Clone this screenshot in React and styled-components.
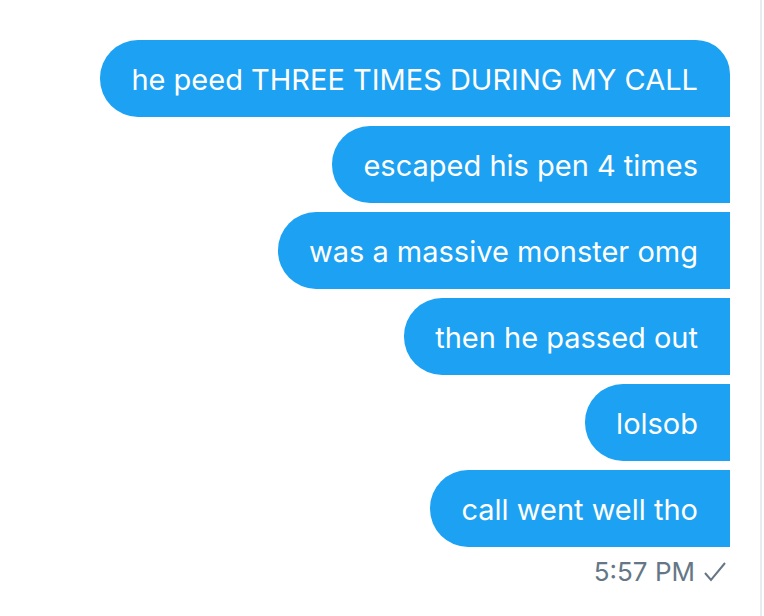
import React from "react";
import styled, { createGlobalStyle } from "styled-components";

const messages = [
  "he peed THREE TIMES DURING MY CALL",
  "escaped his pen 4 times",
  "was a massive monster omg",
  "then he passed out",
  "lolsob",
  "call went well tho",
];

const App = () => {
  return (
    <StPage>
      <GlobalStyle />
      <StThread>
        {messages.map((text, i) => (
          <StBubble key={i} $first={i === 0}>
            {text}
          </StBubble>
        ))}
        <StMeta>
          5:57 PM
          <svg width="24" height="24" viewBox="0 0 24 24">
            <polyline
              points="2,13 8,20 22,3"
              fill="none"
              stroke="#657786"
              strokeWidth="2"
              strokeLinejoin="miter"
            />
          </svg>
        </StMeta>
      </StThread>
      <StDivider />
    </StPage>
  );
};

export default App;

const GlobalStyle = createGlobalStyle`
  html, body {
    margin: 0;
    padding: 0;
    background: #ffffff;
  }
  body {
    font-family: Inter, "Liberation Sans", Arial, sans-serif;
  }
`;

const StPage = styled.div`
  width: 764px;
  height: 616px;
  display: flex;
  background: #ffffff;
  overflow: hidden;
`;

const StThread = styled.div`
  flex: 1;
  display: flex;
  flex-direction: column;
  align-items: flex-end;
  gap: 9px;
  padding: 40px 30px 0 0;
`;

const StBubble = styled.div`
  background: #1da1f2;
  color: #ffffff;
  font-size: 29px;
  line-height: 77px;
  height: 77px;
  padding: 1px 32px 0 31px;
  box-sizing: border-box;
  border-radius: 38px ${({ $first }) => ($first ? "34px" : "0")} 0 38px;
  white-space: nowrap;
`;

const StMeta = styled.div`
  display: flex;
  align-items: center;
  gap: 8px;
  padding-right: 3px;
  color: #657786;
  font-size: 26px;
  line-height: 32px;
`;

const StDivider = styled.div`
  width: 2px;
  margin-right: 2px;
  background: #e6ecf0;
`;
